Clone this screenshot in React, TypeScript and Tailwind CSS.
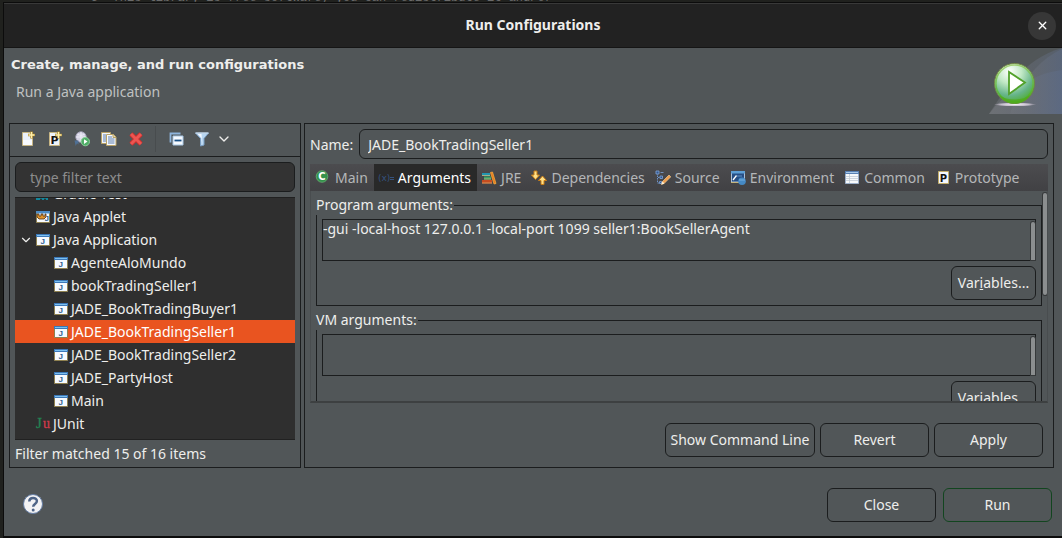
import type { ReactNode } from "react";
import { ChevronDown, X } from "lucide-react";

const buttonClass =
  "h-[34px] shrink-0 rounded-md border border-[#1b1d1e] bg-transparent text-center leading-5 hover:bg-white/5";

function Icon({ children, size = 16 }: { children: ReactNode; size?: number }) {
  return (
    <svg width={size} height={size} viewBox="0 0 16 16" className="shrink-0" aria-hidden="true">
      {children}
    </svg>
  );
}

function Sparkle({ x, y }: { x: number; y: number }) {
  return (
    <g transform={`translate(${x} ${y})`}>
      <path d="M0-3.5V3.5M-3.5 0H3.5" stroke="#a8842a" strokeWidth="2.6" />
      <path d="M0-3V3M-3 0H3" stroke="#fff0ae" strokeWidth="1.3" />
    </g>
  );
}

function NewIcon() {
  return (
    <Icon>
      <path d="M2.5 1.5h10v13h-10z" fill="#e9f0fa" stroke="#c6b583" />
      <path d="M3 9h9v5H3z" fill="#f8fbff" />
      <Sparkle x={11.5} y={4} />
    </Icon>
  );
}

function NewPrototypeIcon() {
  return (
    <Icon>
      <path d="M2.5 1.5h10v13h-10z" fill="#eef3fa" stroke="#c6b583" />
      <text x="3.4" y="13" fontSize="11" fontWeight="bold" fill="#111" fontFamily="DejaVu Sans">P</text>
      <Sparkle x={11.5} y={4} />
    </Icon>
  );
}

function ExportIcon() {
  return (
    <Icon>
      <circle cx="7" cy="6" r="5.2" fill="#d3d1e2" stroke="#a4a2b8" />
      <path d="M2 6h10M7 1v10M3.5 3.2c2 1.5 5 1.5 7 0" fill="none" stroke="#eeeef8" strokeWidth=".9" />
      <path d="M.5 9.5h4v4L3 12.2 1.7 15z" fill="#4f7096" />
      <circle cx="11.3" cy="10.6" r="4.2" fill="#4fae67" stroke="#8bd09a" />
      <path d="M10 8.3v4.6l3.5-2.3z" fill="#fff" />
    </Icon>
  );
}

function DuplicateIcon() {
  return (
    <Icon>
      <path d="M.5 1.5h9v11h-9z" fill="#f2f5fa" stroke="#b9a368" />
      <path d="M2 4h3M2 6h3M2 8h3M2 10h3" stroke="#5c7fae" />
      <path d="M5.5 3.5h7l2.5 2.5v8.500h-9.500z" fill="#f8fafd" stroke="#b9a368" />
      <path d="M12 3.500V6.500h3" fill="#e6d7a2" stroke="#b9a368" />
      <path d="M7 6h4M7 8h6.500M7 10h6.500M7 12h6.500" stroke="#5c7fae" />
    </Icon>
  );
}

function DeleteIcon() {
  return (
    <Icon>
      <path d="M3 3 13 13M13 3 3 13" stroke="#c92f2d" strokeWidth="4.600" />
      <path d="M3 3 13 13M13 3 3 13" stroke="#ee5551" strokeWidth="3" />
    </Icon>
  );
}

function CollapseIcon() {
  return (
    <Icon>
      <path d="M2.500 11.500v-9h10" fill="none" stroke="#8eb4dc" strokeWidth="1.800" />
      <path d="M5 5h10v9H5z" fill="#f5f9fe" stroke="#a9c8e6" />
      <path d="M6.500 9.500h7" stroke="#174f86" strokeWidth="1.800" />
    </Icon>
  );
}

function FilterIcon() {
  return (
    <Icon>
      <path d="M1.500 2h13l-4.500 5.500V14l-3.500 1V7.500z" fill="#b7d5f0" stroke="#7b9fc4" />
      <path d="M3.500 3h4l.800 10.500-1-6.500z" fill="#f2f8ff" />
      <path d="M1.500 2h13" stroke="#e6f1fb" />
    </Icon>
  );
}

function JavaIcon() {
  return (
    <Icon>
      <path d="M1.500 3h13v10.500h-13z" fill="#f6faff" stroke="#8f8150" />
      <path d="M1 2h14v3H1z" fill="#3c78b8" />
      <path d="M2 3.500h12" stroke="#7cc0ef" />
      <text x="5.500" y="12" fontSize="8" fontWeight="bold" fill="#2c5e91" fontFamily="Liberation Sans">J</text>
    </Icon>
  );
}

function AppletIcon() {
  return (
    <Icon>
      <path d="M1.500 3h13v10.500h-13z" fill="#f6faff" stroke="#8f8150" />
      <path d="M1 2h14v2.500H1z" fill="#4c8cc6" />
      <path d="M2 5h2v2h2V5h2v2h2V5h1v3l-2 2H4L2 8z" fill="#e1932a" stroke="#4e3011" strokeWidth=".800" />
      <text x="9.500" y="12" fontSize="8" fontWeight="bold" fill="#2c5e91" fontFamily="Liberation Sans">J</text>
    </Icon>
  );
}

function GradleIcon() {
  return (
    <Icon>
      <path d="M1 14V9c0-4 5-5 8-4 3 1 5 0 5-2 2 3 0 6-1 7v4h-2c0-2-2-2-2 0H7c0-2-2-2-2 0z" fill="#12879c" />
    </Icon>
  );
}

function JUnitIcon() {
  return (
    <Icon>
      <text x="1" y="12" fontSize="15" fill="#238252" stroke="#238252" strokeWidth=".300" fontFamily="Liberation Serif">J</text>
      <text x="8" y="12" fontSize="14" fill="#cf3b4c" stroke="#cf3b4c" strokeWidth=".300" fontFamily="Liberation Serif">u</text>
    </Icon>
  );
}

function ClassIcon() {
  return (
    <Icon>
      <circle cx="7" cy="6.500" r="5.800" fill="#35924c" stroke="#6cb878" strokeWidth=".700" />
      <text x="3.300" y="10.200" fontSize="10" fontWeight="bold" fill="#fff" fontFamily="DejaVu Sans">C</text>
    </Icon>
  );
}

function ArgumentsIcon() {
  return (
    <Icon>
      <text x="0" y="11" fontSize="9" fill="#35527e" fontFamily="DejaVu Sans">(x)</text>
      <path d="M12 7.500h4M12 9.500h4" stroke="#35527e" />
    </Icon>
  );
}

function LibraryIcon() {
  return (
    <Icon>
      <path d="M1 3h8v3H1z" fill="#2395af" />
      <path d="M3 6.500h7v3H3z" fill="#38a167" />
      <path d="M1 10h10v3.500H1z" fill="#c54c20" />
      <path d="M1 5.500h8M3 9h7M1 13h10" stroke="#dfba76" strokeWidth=".700" />
      <path d="m9.500 2.500 2-.5 3.500 11.500-2 .5z" fill="#e67c22" stroke="#ffb03b" strokeWidth=".700" />
    </Icon>
  );
}

function DependenciesIcon() {
  return (
    <Icon>
      <path d="M3 1h3v4h2.500l-4 4.500L.500 5H3z" fill="#ffe087" stroke="#c97d15" />
      <path d="M10 14.500h3v-4h2.500l-4-4.500-4 4.500H10z" fill="#ffe087" stroke="#c97d15" />
    </Icon>
  );
}

function SourceIcon() {
  return (
    <Icon>
      <path d="M2.500 3v10h4M3 7.500h3" fill="none" stroke="#6d93ca" strokeDasharray="1.500 1" />
      <path d="M1 1h3v3H1zM5.500 2.500h3M5 6h2.500v2.500H5zM4.500 11.500h2v2h-2z" fill="#35588e" stroke="#7fa4da" strokeWidth=".800" />
      <path d="m6.500 14.500 1-3L14 5l1.800 1.800-6.500 6.500z" fill="#ef9f50" stroke="#ffd79a" strokeWidth=".600" />
      <path d="m6.500 14.500 1-3 2 1.900z" fill="#fff2d6" />
    </Icon>
  );
}

function EnvironmentIcon() {
  return (
    <Icon>
      <path d="M1.500 2h13v10h-13z" fill="#264f85" stroke="#a8bfd9" />
      <path d="M1 1h14v2.500H1z" fill="#5d9fd5" />
      <path d="M1 12.500h8" stroke="#c4b57e" />
      <path d="m3 10 3.500-4.500" stroke="#fff" strokeWidth="1.300" />
      <path d="M7 6h5" stroke="#5d8fc4" />
      <circle cx="12" cy="11.200" r="3.800" fill="#4589c4" />
      <path d="M9 10h6" stroke="#74b0df" />
    </Icon>
  );
}

function CommonIcon() {
  return (
    <Icon>
      <path d="M1.500 1.500h13v12h-13z" fill="#f8fafb" stroke="#9db0ca" />
      <path d="M1 1h14v3H1z" fill="#5980b2" />
      <path d="M2 2.500h12" stroke="#a8c8e8" />
      <path d="M5.500 4v9M2 6.500h12M2 8.500h12M2 10.500h12" stroke="#c3ccd6" strokeWidth=".800" />
    </Icon>
  );
}

function PrototypeIcon() {
  return (
    <Icon>
      <path d="M3.500 1.500h10v12h-10z" fill="#f3f6ff" stroke="#c3ae6b" />
      <text x="4.800" y="11.500" fontSize="10" fontWeight="bold" fill="#111" fontFamily="DejaVu Sans">P</text>
    </Icon>
  );
}

function Banner() {
  return (
    <svg width="73" height="66" viewBox="0 0 73 66" className="shrink-0" aria-hidden="true">
      <defs>
        <linearGradient id="sweep" x1="0" x2="1">
          <stop offset="0" stopColor="#74777c" />
          <stop offset=".5" stopColor="#6b707a" />
          <stop offset="1" stopColor="#5d6b86" />
        </linearGradient>
        <radialGradient id="ball" cx=".38" cy=".2" r=".85">
          <stop offset="0" stopColor="#fff" />
          <stop offset=".35" stopColor="#c2e9c6" />
          <stop offset=".7" stopColor="#66b489" />
          <stop offset="1" stopColor="#4aab21" />
        </radialGradient>
        <radialGradient id="shade">
          <stop offset="0" stopColor="#f4eef6" />
          <stop offset=".65" stopColor="#c5becb" />
          <stop offset="1" stopColor="#c5becb" stopOpacity="0" />
        </radialGradient>
        <linearGradient id="rim" x2="0" y2="1">
          <stop offset="0" stopColor="#8bc34a" />
          <stop offset="1" stopColor="#46b514" />
        </linearGradient>
      </defs>
      <path d="M0 66C16 41 37 10 73 0v66z" fill="url(#sweep)" opacity=".45" />
      <path d="M21 66C30 36 49 12 73 1v65z" fill="url(#sweep)" opacity=".5" />
      <path d="M0 66C19 41 47 25 73 22v44z" fill="url(#sweep)" opacity=".65" />
      <ellipse cx="26" cy="56.500" rx="21" ry="2" fill="url(#shade)" />
      <circle cx="25.500" cy="35.500" r="20" fill="url(#ball)" stroke="#718642" />
      <circle cx="25.500" cy="35.500" r="18.600" fill="none" stroke="url(#rim)" strokeWidth="1.500" opacity=".7" />
      <path d="M10 47a18 18 0 0 0 31 0c-8 6-23 6-31 0z" fill="#50a91b" opacity=".75" />
      <path d="M20 24v22l16-11.500z" fill="#fff" stroke="#51a12a" strokeWidth="1.800" />
    </svg>
  );
}

const tools = [
  { label: "New launch configuration", icon: <NewIcon /> },
  { label: "New launch configuration prototype", icon: <NewPrototypeIcon /> },
  { label: "Export launch configuration", icon: <ExportIcon /> },
  { label: "Duplicate", icon: <DuplicateIcon /> },
  { label: "Delete", icon: <DeleteIcon /> },
];

const configurations = [
  "AgenteAloMundo",
  "bookTradingSeller1",
  "JADE_BookTradingBuyer1",
  "JADE_BookTradingSeller1",
  "JADE_BookTradingSeller2",
  "JADE_PartyHost",
  "Main",
];

const tabs = [
  { label: "Main", icon: <ClassIcon /> },
  { label: "Arguments", icon: <ArgumentsIcon /> },
  { label: "JRE", icon: <LibraryIcon /> },
  { label: "Dependencies", icon: <DependenciesIcon /> },
  { label: "Source", icon: <SourceIcon /> },
  { label: "Environment", icon: <EnvironmentIcon /> },
  { label: "Common", icon: <CommonIcon /> },
  { label: "Prototype", icon: <PrototypeIcon /> },
];

function TreeRow({ label, icon, nested, open, selected }: {
  label: string;
  icon: ReactNode;
  nested?: boolean;
  open?: boolean;
  selected?: boolean;
}) {
  return (
    <li
      role="treeitem"
      aria-selected={!!selected}
      className={`flex h-[23px] shrink-0 items-center gap-0.5 whitespace-nowrap ${nested ? "pl-[38px]" : open ? "pl-1" : "pl-5"} ${selected ? "bg-[#e95420] text-white" : ""}`}
    >
      {open && <ChevronDown size={14} strokeWidth={2} className="shrink-0" />}
      {icon}
      <span>{label}</span>
    </li>
  );
}

function ArgumentGroup({ title, value, mnemonic }: { title: string; value: string; mnemonic?: boolean }) {
  return (
    <fieldset className="flex shrink-0 flex-col border border-[#1b1d1e] px-[5px] pt-1 pb-[5px]">
      <legend className="-ml-1.5 bg-[#515658] pr-px leading-5">{title}</legend>
      <div className="relative h-[42px]">
        <textarea
          aria-label={title}
          defaultValue={value}
          className="block h-full w-full resize-none overflow-hidden border border-[#1b1d1e] bg-transparent leading-[18px] outline-none"
        />
        <div className="absolute top-[3px] right-px bottom-px w-1 rounded-t-sm bg-[#8b8e8f] ring-1 ring-[#36393a]" />
      </div>
      <button type="button" className={`mt-[5px] w-[85px] self-end ${buttonClass}`}>
        {mnemonic ? <>Var<u>i</u>ables...</> : "Variables..."}
      </button>
    </fieldset>
  );
}

export default function App() {
  return (
    <div className="flex h-screen flex-col bg-[#20211e] pl-[3px] font-['Noto_Sans',sans-serif] text-[14px] text-[#eeeeec]">
      <div className="flex h-0.5 shrink-0 flex-col justify-end overflow-hidden pl-[88px] font-['Liberation_Mono',monospace] text-[12px] leading-[8px] whitespace-pre text-[#6a6a6a]">
        5  This library is free software; you can redistribute it and/or
      </div>

      <div className="flex min-h-0 flex-1 flex-col border-y border-b-2 border-l border-[#0c0c0c] bg-[#515658]">
        <header className="grid h-[45px] shrink-0 grid-cols-[1fr_auto_1fr] items-center border-t border-b border-t-[#393939] border-b-[#151515] bg-[#222222] px-1.5">
          <h1 className="col-start-2 pb-0.5 font-bold">Run Configurations</h1>
          <button
            type="button"
            aria-label="Close dialog"
            className="flex size-7 items-center justify-center justify-self-end rounded-full bg-[#373737] text-white"
          >
            <X size={13} strokeWidth={2.5} />
          </button>
        </header>

        <section className="flex h-[75px] shrink-0 items-start justify-between pl-[7px]">
          <div>
            <h2 className="pt-[7px] font-['DejaVu_Sans',sans-serif] text-[13px] leading-5 font-bold">
              Create, manage, and run configurations
            </h2>
            <p className="pt-[7px] pl-[5px] leading-5 text-[#bfc1c1]">Run a Java application</p>
          </div>
          <Banner />
        </section>

        <main className="flex min-h-0 flex-1 gap-[3px] pr-2 pl-[5px]">
          <aside className="flex w-[292px] shrink-0 flex-col border border-[#1b1d1e]">
            <div className="flex h-[33px] shrink-0 items-center border-b border-[#1b1d1e] px-2.5 pb-0.5">
              <div className="flex gap-[11px]">
                {tools.map((tool) => (
                  <button key={tool.label} type="button" aria-label={tool.label}>{tool.icon}</button>
                ))}
              </div>
              <div className="mr-3 ml-[11px] h-[26px] w-px bg-[#484c4e]" />
              <div className="flex items-center gap-2.5">
                <button type="button" aria-label="Collapse all"><CollapseIcon /></button>
                <button type="button" aria-label="Filter"><FilterIcon /></button>
                <button type="button" aria-label="Filter menu" className="-ml-1">
                  <ChevronDown size={16} />
                </button>
              </div>
            </div>
            <div className="flex min-h-0 flex-1 flex-col px-[5px] pt-[5px]">
              <input
                aria-label="Filter configurations"
                placeholder="type filter text"
                className="h-[30px] w-full shrink-0 rounded-md border border-[#1b1d1e] bg-[#333333] px-3.5 outline-none placeholder:text-[#8d8d8d]"
              />
              <ul
                role="tree"
                className="mt-[5px] flex min-h-0 flex-1 flex-col justify-end overflow-hidden border-y border-[#212121] bg-[#2f2f2f] pb-1"
              >
                <TreeRow label="Gradle Test" icon={<GradleIcon />} />
                <TreeRow label="Java Applet" icon={<AppletIcon />} />
                <TreeRow label="Java Application" icon={<JavaIcon />} open />
                {configurations.map((name) => (
                  <TreeRow key={name} label={name} icon={<JavaIcon />} nested selected={name === "JADE_BookTradingSeller1"} />
                ))}
                <TreeRow label="JUnit" icon={<JUnitIcon />} />
              </ul>
              <p className="h-[27px] shrink-0 pt-1 leading-5">Filter matched 15 of 16 items</p>
            </div>
          </aside>

          <section className="flex min-w-0 flex-1 flex-col border border-[#1b1d1e] px-[5px] pt-[5px] pb-2.5">
            <div className="flex shrink-0 items-center gap-1.5">
              <label htmlFor="name">Name:</label>
              <input
                id="name"
                defaultValue="JADE_BookTradingSeller1"
                className="h-[30px] min-w-0 flex-1 rounded-md border border-[#1b1d1e] bg-transparent px-2 outline-none"
              />
            </div>

            <div role="tablist" className="mt-[5px] flex h-[27px] shrink-0 bg-linear-to-b from-[#4c4c4f] to-[#414144] pl-px">
              {tabs.map((tab) => (
                <button
                  key={tab.label}
                  type="button"
                  role="tab"
                  aria-selected={tab.label === "Arguments"}
                  className="flex items-center gap-1 pr-1.5 pl-1 text-[#b4b6b8] aria-selected:bg-[#292929] aria-selected:text-white"
                >
                  {tab.icon}
                  {tab.label}
                </button>
              ))}
            </div>

            <div className="relative flex min-h-0 flex-1 flex-col gap-1 overflow-hidden border-x border-b-2 border-x-[#494d4f] border-b-[#3d4041] pt-1 pr-[5px] pl-[5px]">
              <ArgumentGroup
                title="Program arguments:"
                value="-gui -local-host 127.0.0.1 -local-port 1099 seller1:BookSellerAgent"
                mnemonic
              />
              <ArgumentGroup title="VM arguments:" value="" />
              <div className="absolute top-0.5 right-0 h-[102px] w-1 rounded-sm bg-[#8b8e8f] ring-1 ring-[#36393a]" />
            </div>

            <div className="mt-5 flex shrink-0 justify-end gap-[5px] pr-[5px]">
              <button type="button" className={`w-[150px] ${buttonClass}`}>Show Command Line</button>
              <button type="button" className={`w-[109px] ${buttonClass}`}>Revert</button>
              <button type="button" className={`w-[109px] ${buttonClass}`}>Apply</button>
            </div>
          </section>
        </main>

        <footer className="flex h-[68px] shrink-0 items-center pt-1.5 pr-2.5 pl-[18px]">
          <button type="button" aria-label="Help" className="mr-auto">
            <svg width="22" height="22" viewBox="0 0 22 22" aria-hidden="true">
              <circle cx="11" cy="10" r="9.500" fill="#f2f2f4" stroke="#647da5" />
              <path d="M7.300 7.600c0-5 7.600-4.700 7.600-.500 0 2.900-3.700 3-3.700 5.600" fill="none" stroke="#4e6487" strokeWidth="2.500" />
              <circle cx="11.200" cy="16" r="1.500" fill="#4e6487" />
            </svg>
          </button>
          <button type="button" className={`mr-[7px] w-[109px] ${buttonClass}`}>Close</button>
          <button type="button" className="h-[34px] w-[109px] rounded-md border border-[#12451f] leading-5 hover:bg-white/5">Run</button>
        </footer>
      </div>
    </div>
  );
}
